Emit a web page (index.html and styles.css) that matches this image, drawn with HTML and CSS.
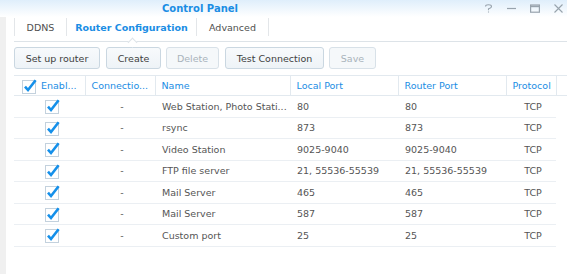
FILE: index.html
```html
<!DOCTYPE html>
<html lang="en">
  <head>
    <meta charset="utf-8" />
    <title>Control Panel</title>
    <link rel="stylesheet" href="styles.css">
  </head>
  <body>
    <div class="window">
      <div class="titlebar">
        <div class="title">Control Panel</div>
        <div class="controls">
          <svg width="9" height="9" viewBox="0 0 9 9"><path d="M1.5,2.5 Q1.5,0.8 4.5,0.8 Q7.5,0.8 7.5,2.6 Q7.5,4 4.5,4.8 L4.5,6.2 M4.5,7.6 L4.5,8.6" fill="none" stroke="#98a3ad" stroke-width="1.1"/></svg>
          <svg width="9" height="9" viewBox="0 0 9 9"><path d="M0,4.5 H9" stroke="#98a3ad" stroke-width="1.2"/></svg>
          <svg width="10" height="9" viewBox="0 0 10 9"><rect x="0.6" y="1" width="8.8" height="7.2" fill="none" stroke="#98a3ad" stroke-width="1.2"/><path d="M0.6,2.4 H9.4" stroke="#98a3ad" stroke-width="1.6"/></svg>
          <svg width="9" height="9" viewBox="0 0 9 9"><path d="M0.5,0.5 L8.5,8.5 M8.5,0.5 L0.5,8.5" stroke="#98a3ad" stroke-width="1.1"/></svg>
        </div>
      </div>
      <div class="frame">
        <div class="rail"></div>
        <div class="main">
          <div class="tabs">
            <div class="tab tab-first">DDNS</div>
            <div class="tab tab-active">Router Configuration</div>
            <div class="tab">Advanced</div>
          </div>
          <div class="toolbar">
            <button class="btn btn-setup">Set up router</button>
            <button class="btn btn-create">Create</button>
            <button class="btn btn-delete" disabled>Delete</button>
            <button class="btn btn-test">Test Connection</button>
            <button class="btn btn-save" disabled>Save</button>
          </div>
          <table class="grid">
            <colgroup>
              <col class="c-enabled">
              <col class="c-conn">
              <col class="c-name">
              <col class="c-local">
              <col class="c-router">
              <col class="c-proto">
              <col>
            </colgroup>
            <thead>
              <tr>
                <th class="h-enabled">
                  <div class="h-check">
                    <svg class="check" width="16" height="16" viewBox="0 0 16 16"><rect x="0.5" y="2.5" width="13" height="13" fill="#fff" stroke="#c3d1dd"/><path d="M3,8.6 L6,12 L13.6,2.2" fill="none" stroke="#1590ea" stroke-width="2.6"/></svg>
                    <span title="Enabled">Enabl...</span>
                  </div>
                </th>
                <th><span title="Connection">Connectio...</span></th>
                <th>Name</th>
                <th>Local Port</th>
                <th>Router Port</th>
                <th>Protocol</th>
                <th class="filler"></th>
              </tr>
            </thead>
            <tbody>
              <tr>
                <td class="cell-check"><svg class="check" width="16" height="16" viewBox="0 0 16 16"><rect x="0.5" y="2.5" width="13" height="13" fill="#fff" stroke="#c3d1dd"/><path d="M3,8.6 L6,12 L13.6,2.2" fill="none" stroke="#1590ea" stroke-width="2.6"/></svg></td>
                <td class="cell-dash">-</td>
                <td class="cell-name"><span title="Web Station, Photo Station, Web Server">Web Station, Photo Stati...</span></td>
                <td>80</td>
                <td>80</td>
                <td class="cell-proto">TCP</td>
                <td class="filler"></td>
              </tr>
              <tr>
                <td class="cell-check"><svg class="check" width="16" height="16" viewBox="0 0 16 16"><rect x="0.5" y="2.5" width="13" height="13" fill="#fff" stroke="#c3d1dd"/><path d="M3,8.6 L6,12 L13.6,2.2" fill="none" stroke="#1590ea" stroke-width="2.6"/></svg></td>
                <td class="cell-dash">-</td>
                <td class="cell-name">rsync</td>
                <td>873</td>
                <td>873</td>
                <td class="cell-proto">TCP</td>
                <td class="filler"></td>
              </tr>
              <tr>
                <td class="cell-check"><svg class="check" width="16" height="16" viewBox="0 0 16 16"><rect x="0.5" y="2.5" width="13" height="13" fill="#fff" stroke="#c3d1dd"/><path d="M3,8.6 L6,12 L13.6,2.2" fill="none" stroke="#1590ea" stroke-width="2.6"/></svg></td>
                <td class="cell-dash">-</td>
                <td class="cell-name">Video Station</td>
                <td>9025-9040</td>
                <td>9025-9040</td>
                <td class="cell-proto">TCP</td>
                <td class="filler"></td>
              </tr>
              <tr>
                <td class="cell-check"><svg class="check" width="16" height="16" viewBox="0 0 16 16"><rect x="0.5" y="2.5" width="13" height="13" fill="#fff" stroke="#c3d1dd"/><path d="M3,8.6 L6,12 L13.6,2.2" fill="none" stroke="#1590ea" stroke-width="2.6"/></svg></td>
                <td class="cell-dash">-</td>
                <td class="cell-name">FTP file server</td>
                <td>21, 55536-55539</td>
                <td>21, 55536-55539</td>
                <td class="cell-proto">TCP</td>
                <td class="filler"></td>
              </tr>
              <tr>
                <td class="cell-check"><svg class="check" width="16" height="16" viewBox="0 0 16 16"><rect x="0.5" y="2.5" width="13" height="13" fill="#fff" stroke="#c3d1dd"/><path d="M3,8.6 L6,12 L13.6,2.2" fill="none" stroke="#1590ea" stroke-width="2.6"/></svg></td>
                <td class="cell-dash">-</td>
                <td class="cell-name">Mail Server</td>
                <td>465</td>
                <td>465</td>
                <td class="cell-proto">TCP</td>
                <td class="filler"></td>
              </tr>
              <tr>
                <td class="cell-check"><svg class="check" width="16" height="16" viewBox="0 0 16 16"><rect x="0.5" y="2.5" width="13" height="13" fill="#fff" stroke="#c3d1dd"/><path d="M3,8.6 L6,12 L13.6,2.2" fill="none" stroke="#1590ea" stroke-width="2.6"/></svg></td>
                <td class="cell-dash">-</td>
                <td class="cell-name">Mail Server</td>
                <td>587</td>
                <td>587</td>
                <td class="cell-proto">TCP</td>
                <td class="filler"></td>
              </tr>
              <tr>
                <td class="cell-check"><svg class="check" width="16" height="16" viewBox="0 0 16 16"><rect x="0.5" y="2.5" width="13" height="13" fill="#fff" stroke="#c3d1dd"/><path d="M3,8.6 L6,12 L13.6,2.2" fill="none" stroke="#1590ea" stroke-width="2.6"/></svg></td>
                <td class="cell-dash">-</td>
                <td class="cell-name">Custom port</td>
                <td>25</td>
                <td>25</td>
                <td class="cell-proto">TCP</td>
                <td class="filler"></td>
              </tr>
            </tbody>
          </table>
        </div>
      </div>
    </div>
  </body>
</html>
```

FILE: styles.css
```css
body {
  margin: 0;
  font-family: "DejaVu Sans", Verdana, sans-serif;
  font-size: 9.5px;
  color: #555;
  background: #fff;
  overflow: hidden;
}

.window {
  width: 567px;
  height: 274px;
  display: flex;
  flex-direction: column;
}

.titlebar {
  height: 17px;
  flex: none;
  display: flex;
  align-items: center;
  background: linear-gradient(#dfeefb, #ffffff);
}

.title {
  margin-left: 162px;
  font-weight: bold;
  font-size: 10px;
  color: #1a8de4;
}

.controls {
  margin-left: auto;
  margin-right: 4px;
  display: flex;
  align-items: center;
  gap: 14px;
}

.frame {
  flex: 1;
  display: flex;
}

.rail {
  width: 6px;
  background: #f0f0f0;
}

.main {
  flex: 1;
  padding-left: 8px;
}

.tabs {
  height: 24px;
  display: flex;
  align-items: flex-start;
  border-bottom: 1px solid #dde3e8;
  position: relative;
}

.tab {
  height: 18px;
  line-height: 19px;
  margin-top: 1px;
  text-align: center;
  border-right: 1px solid #e3e6e9;
  color: #505050;
}

.tab-first {
  width: 51px;
  border-left: 1px solid #e3e6e9;
}

.tab-active {
  width: 129px;
  color: #1a8de4;
  font-weight: bold;
  position: relative;
}

.tab-active::after {
  content: "";
  position: absolute;
  left: 62px;
  bottom: -10px;
  width: 6px;
  height: 6px;
  background: #fff;
  border-left: 1px solid #dde3e8;
  border-top: 1px solid #dde3e8;
  transform: rotate(45deg);
}

.tab:last-child {
  width: 71px;
}

.toolbar {
  display: flex;
  gap: 5px;
  margin-top: 5px;
}

.btn {
  height: 22px;
  padding: 0;
  font-family: inherit;
  font-size: 9.5px;
  color: #404040;
  background: linear-gradient(#f8fafc, #eef3f7);
  border: 1px solid #cad7e1;
  border-radius: 3px;
}

.btn:disabled {
  color: #a9b3bb;
  background: #f5f8fa;
  border-color: #d8e1e8;
}

.btn-setup { width: 86px; }
.btn-create { width: 55px; margin-left: 1px; }
.btn-delete { width: 53px; }
.btn-test { width: 99px; margin-left: 1px; }
.btn-save { width: 47px; }

.grid {
  margin-top: 6px;
  width: 553px;
  border-collapse: collapse;
  table-layout: fixed;
}

.c-enabled { width: 71px; }
.c-conn { width: 70px; }
.c-name { width: 135px; }
.c-local { width: 108px; }
.c-router { width: 108px; }
.c-proto { width: 50px; }

.grid th {
  height: 19px;
  padding: 0 2px 0 6px;
  text-align: left;
  font-weight: normal;
  color: #1a8de4;
  border-top: 1px solid #e2e9ef;
  border-bottom: 1px solid #e2e9ef;
  border-right: 1px solid #e2e9ef;
  white-space: nowrap;
  overflow: hidden;
}

.grid th.h-enabled {
  padding-left: 8px;
}

.h-check {
  display: flex;
  align-items: center;
  gap: 3px;
}

.grid td {
  height: 20.5px;
  padding: 0 2px 0 7px;
  border-bottom: 1px solid #ebeff3;
  white-space: nowrap;
  overflow: hidden;
}

.grid td.cell-name {
  padding-right: 1px;
}

.grid td.filler {
  border-bottom: none;
}

.grid th.filler {
  border-right: none;
}

.grid td.cell-check {
  padding: 0 0 0 31px;
}

.check {
  display: block;
}

.grid td.cell-dash,
.grid td.cell-proto {
  text-align: center;
  padding: 0 0 0 4px;
}
```
